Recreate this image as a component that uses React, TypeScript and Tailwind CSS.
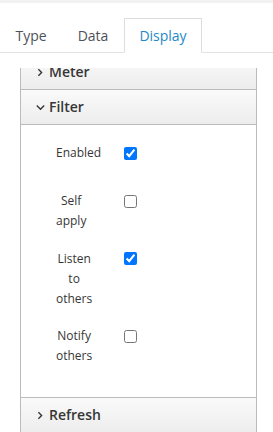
import React from 'react';

const tabs = ['Type', 'Data', 'Display'];

const rows = [
  { label: 'Enabled', checked: true },
  { label: 'Self apply', checked: false },
  { label: 'Listen to others', checked: true },
  { label: 'Notify others', checked: false },
];

const Chevron: React.FC<{ open?: boolean }> = ({ open }) => (
  <svg width="9" height="9" viewBox="0 0 9 9" className="shrink-0">
    {open ? (
      <polyline points="0.8,2.6 4.5,6.3 8.2,2.6" fill="none" stroke="#363636" strokeWidth="1.4" />
    ) : (
      <polyline points="2.4,1.3 5.6,4.5 2.4,7.7" fill="none" stroke="#363636" strokeWidth="1.4" />
    )}
  </svg>
);

const PanelHeading: React.FC<{ title: string; open?: boolean }> = ({ title, open }) => (
  <div className="h-[35px] border-b border-[#bbb] bg-gradient-to-b from-[#fafafa] to-[#ededed] flex items-center pl-[15px] gap-[4px]">
    <Chevron open={open} />
    <span className="text-[14px] font-semibold text-[#363636] leading-5">{title}</span>
  </div>
);

export default function App() {
  return (
    <div className="w-[273px] h-[432px] overflow-hidden bg-white font-['Open_Sans',sans-serif]">
      <div className="h-[3px] bg-[#f2f2f2]" />

      {/* Tabs */}
      <div className="pt-[15px] flex border-b border-[#e2e2e2]">
        {tabs.map(t => (
          <div
            key={t}
            className={`h-[35px] -mb-px px-[14.5px] border flex items-center text-[14px] ${
              t === 'Display'
                ? 'border-[#ddd] border-b-white text-[#2489c5]'
                : 'border-transparent text-[#4d5258]'
            }`}
          >
            {t}
          </div>
        ))}
      </div>

      {/* Scrolled panel area, Meter heading partly scrolled out of view */}
      <div className="mt-[15px] h-[364px] overflow-hidden pl-[20px] pr-[16px]">
        <div className="-mt-[13px] border-x border-[#bbb]">
          <PanelHeading title="Meter" />
          <PanelHeading title="Filter" open />
          <div className="border-b border-[#bbb] pt-[18px] pb-[31px] pl-[35px] flex flex-col gap-[17.5px]">
            {rows.map(r => (
              <div key={r.label} className="flex items-start min-h-[30.5px]">
                <div className="w-[68px]">
                  <div className="w-min text-center text-[12px] leading-5 text-[#363636]">{r.label}</div>
                </div>
                <div className="h-5 flex items-center">
                  <input type="checkbox" defaultChecked={r.checked} className="m-0 w-[13px] h-[13px]" />
                </div>
              </div>
            ))}
          </div>
          <PanelHeading title="Refresh" />
        </div>
      </div>
    </div>
  );
}
